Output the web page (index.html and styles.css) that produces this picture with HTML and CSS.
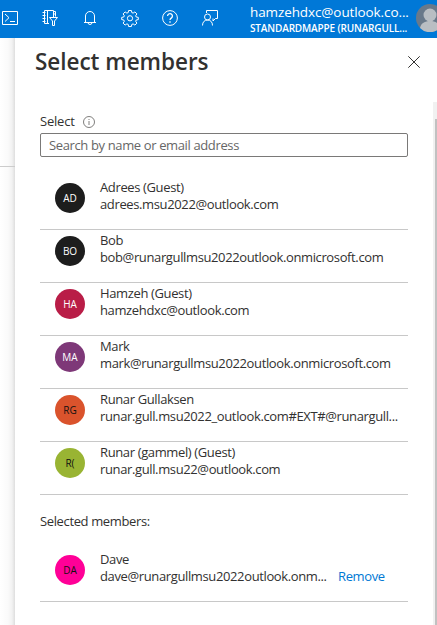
FILE: index.html
```
<!DOCTYPE html>
<html lang="en">
<head>
<meta charset="utf-8">
<title>Select members</title>
<link rel="stylesheet" href="styles.css">
</head>
<body>
<header class="topbar">
  <nav class="tools">
    <svg class="tool" viewBox="0 0 20 20"><path d="M2.500 3.500h15v13h-15z M5 6l4 3.700-4 3.800 M10 13.500h5"/></svg>
    <svg class="tool" viewBox="0 0 20 20"><path d="M9 15.500H4.500v-13h9V9 M7.500 2.500v13 M13.500 3.500h2v5 M15.500 6h-2 M2.500 4.500h3 M2.500 7.500h3 M2.500 10.500h3 M2.500 13.500h3"/><path class="solid" d="M9.500 9.500h8l-3 3.500v4.500h-2V13z"/></svg>
    <svg class="tool" viewBox="0 0 20 20"><path d="M4 14.500h12 M5.500 14.500V8a4.500 4.500 0 0 1 9 0v6.500 M8 14.500a2 2 0 0 0 4 0"/></svg>
    <svg class="tool" viewBox="0 0 20 20"><path d="M8.600 2.500h2.800l.4 2.100 1.300.5 1.800-1.200 2 2-1.200 1.800.5 1.300 2.100.4v2.200l-2.100.4-.5 1.300 1.200 1.800-2 2-1.800-1.200-1.300.5-.4 2.100H8.600l-.4-2.100-1.300-.5-1.800 1.200-2-2 1.200-1.800-.5-1.300-2.100-.4V9.400l2.100-.4.5-1.300-1.200-1.800 2-2 1.800 1.200 1.300-.5z"/><circle cx="10" cy="10.300" r="2.600"/></svg>
    <svg class="tool" viewBox="0 0 20 20"><circle cx="10" cy="10" r="7.400"/><path class="bold" d="M7.600 8a2.400 2.400 0 1 1 3.900 1.900c-1 .7-1.500 1.100-1.500 2.200 M10 13.200v1.500"/></svg>
    <svg class="tool" viewBox="0 0 20 20"><path d="M6.500 5V2.500h11v8h-2L13 13v-2.500 M2.500 17.500c0-3.500 2-5.500 5-5.500s5 2 5 5.500"/><circle cx="7.500" cy="9" r="3"/></svg>
  </nav>
  <div class="account">
    <div class="account-mail">hamzehdxc@outlook.co...</div>
    <div class="account-dir">STANDARDMAPPE (RUNARGULL...</div>
  </div>
  <svg class="profile" viewBox="0 0 28 28"><circle cx="14" cy="14" r="14" fill="#69798a"/><circle cx="14" cy="11" r="6.500" fill="#b9bec3"/><path d="M4 24c1-5 5-7 10-7s9 2 10 7a14 14 0 0 1-20 0z" fill="#b9bec3"/></svg>
</header>
<div class="workspace">
  <div class="backdrop"><div class="backdrop-rule"></div></div>
  <main class="panel">
    <div class="panel-head">
      <h1>Select members</h1>
      <svg class="close" viewBox="0 0 12 12"><path d="M.3.300l11.400 11.400 M11.700.300L.3 11.700"/></svg>
    </div>
    <div class="panel-body">
      <div class="content">
        <label class="label" for="search"><span class="label-text">Select</span><svg class="info" viewBox="0 0 12 12"><circle cx="6" cy="6" r="5.500"/><path d="M6 3v1 M6 5v4"/></svg></label>
        <input class="search" id="search" placeholder="Search by name or email address">
        <ul class="members">
          <li class="member"><span class="avatar black">AD</span><div class="who"><div class="name">Adrees (Guest)</div><div class="mail">adrees.msu2022@outlook.com</div></div></li>
          <li class="member"><span class="avatar black">BO</span><div class="who"><div class="name">Bob</div><div class="mail">bob@runargullmsu2022outlook.onmicrosoft.com</div></div></li>
          <li class="member"><span class="avatar crimson">HA</span><div class="who"><div class="name">Hamzeh (Guest)</div><div class="mail">hamzehdxc@outlook.com</div></div></li>
          <li class="member"><span class="avatar purple">MA</span><div class="who"><div class="name">Mark</div><div class="mail">mark@runargullmsu2022outlook.onmicrosoft.com</div></div></li>
          <li class="member"><span class="avatar orange">RG</span><div class="who"><div class="name">Runar Gullaksen</div><div class="mail">runar.gull.msu2022_outlook.com#EXT#@runargull...</div></div></li>
          <li class="member"><span class="avatar green">R(</span><div class="who"><div class="name">Runar (gammel) (Guest)</div><div class="mail">runar.gull.msu22@outlook.com</div></div></li>
        </ul>
        <div class="selected-title">Selected members:</div>
        <ul class="members">
          <li class="member"><span class="avatar pink">DA</span><div class="who picked"><div class="name">Dave</div><div class="mail">dave@runargullmsu2022outlook.onm...</div></div><a class="remove">Remove</a></li>
        </ul>
      </div>
      <div class="scrollbar"><div class="thumb"></div></div>
    </div>
  </main>
</div>
</body>
</html>
```
FILE: styles.css
```
* { box-sizing: border-box; }
body {
  margin: 0;
  width: 437px;
  height: 625px;
  overflow: hidden;
  background: #fff;
  color: #323130;
  font: 13px/17px "Open Sans", "Noto Sans", sans-serif;
  letter-spacing: -.37px;
}
.topbar {
  display: flex;
  height: 38px;
  background: #0078d7;
  color: #fff;
  overflow: hidden;
}
.tools { display: flex; gap: 20px; padding-top: 8px; flex: none; width: 250px; }
.tool {
  width: 20px;
  height: 20px;
  flex: none;
  fill: none;
  stroke: #fff;
  stroke-width: 1;
}
.solid { fill: #0078d7; }
.bold { stroke-width: 1.3; }
.account { flex: none; width: 166px; padding-top: 4px; white-space: nowrap; }
.account-mail { font-size: 13.5px; letter-spacing: -.1px; }
.account-dir { font-size: 10px; line-height: 15px; font-weight: 600; letter-spacing: -.15px; }
.profile { width: 28px; height: 28px; flex: none; margin-top: 4px; }
.workspace { display: flex; height: 587px; }
.backdrop {
  width: 15px;
  flex: none;
  padding-top: 128px;
  background: linear-gradient(to right, #fff 0, #fafafa 8px, #f2f2f2 12px, #dedede 15px);
}
.backdrop-rule { height: 1px; background: #ccc; }
.panel { width: 422px; background: #fff; }
.panel-head {
  display: flex;
  justify-content: space-between;
  align-items: center;
  height: 64px;
  padding: 0 17px 16px 20px;
}
h1 {
  margin: 0;
  font-size: 22.5px;
  line-height: 30px;
  font-weight: 600;
  letter-spacing: -.04px;
  white-space: nowrap;
}
.close { width: 12px; height: 12px; fill: none; stroke: #323130; stroke-width: 1; }
.panel-body { display: flex; justify-content: space-between; height: 523px; }
.content { width: 368px; margin-left: 25px; padding-top: 11px; }
.label { display: flex; align-items: center; gap: 9px; height: 17px; letter-spacing: -.2px; }
.label-text { width: 34px; }
.info { width: 12px; height: 12px; fill: none; stroke: #605e5c; stroke-width: .8; }
.search {
  display: block;
  width: 368px;
  height: 24px;
  margin: 3px 0 20px;
  padding: 0 8px;
  border: 1px solid #7a7978;
  border-radius: 2px;
  font: inherit;
  letter-spacing: inherit;
  outline: 0;
}
.search::placeholder { color: #666; opacity: 1; }
.members { list-style: none; margin: 0; padding: 0; }
.member {
  display: flex;
  height: 53px;
  padding: 6px 0 0 15px;
  border-bottom: 1px solid #c8c8c8;
}
.avatar {
  width: 30px;
  height: 30px;
  flex: none;
  border-radius: 50%;
  font-size: 10px;
  line-height: 31px;
  letter-spacing: 0;
  text-align: center;
  color: #fff;
}
.black { background: #1d1d1d; }
.crimson { background: #b91d47; }
.purple { background: #7e3878; }
.orange { background: #da532c; color: #111; }
.green { background: #99b433; color: #111; }
.pink { background: #ff0097; color: #111; }
.who { margin: -4px 0 0 15px; white-space: nowrap; }
.picked { width: 238px; }
.selected-title { height: 54px; padding-top: 18px; }
.remove { padding-top: 13px; color: #0078d4; }
.scrollbar { width: 4px; padding: 17px 0 0 2px; background: #f1f1f1; }
.thumb { height: 506px; background: #c1c1c1; }
```
